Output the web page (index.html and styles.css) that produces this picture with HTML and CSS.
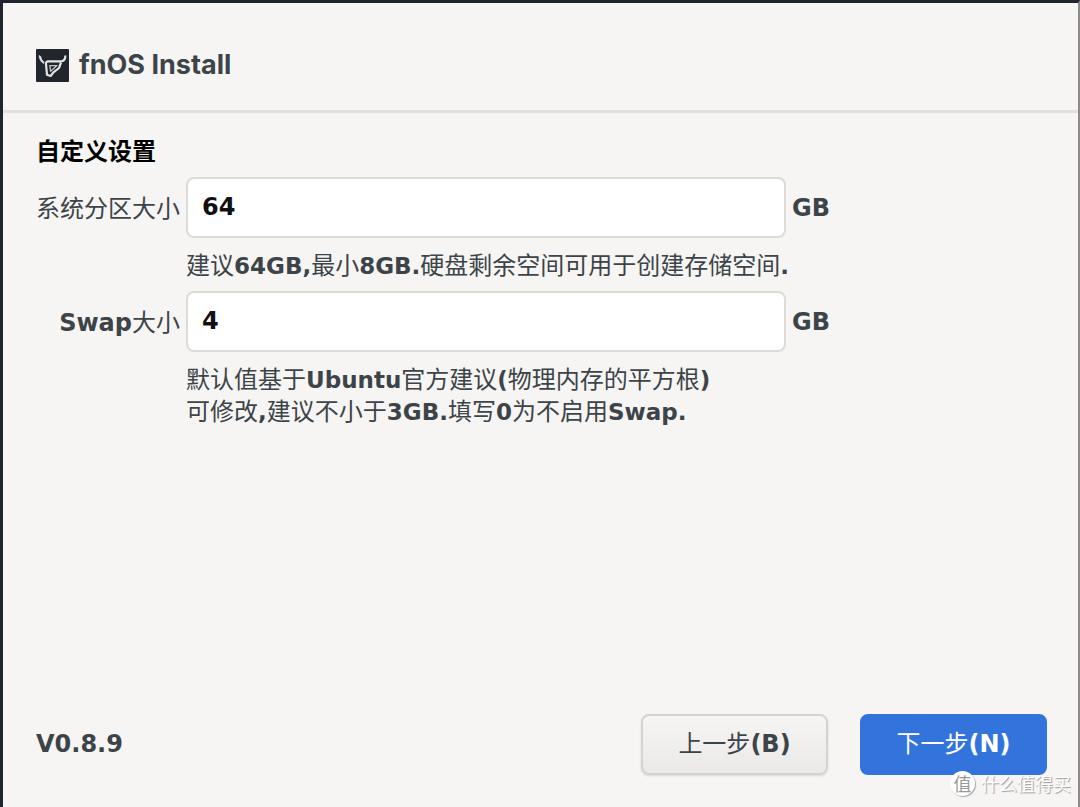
FILE: index.html
```html
<!DOCTYPE html>
<html lang="zh-CN">
<head>
<meta charset="utf-8">
<meta name="viewport" content="width=device-width, initial-scale=1">
<title>fnOS Install</title>
<link rel="stylesheet" href="styles.css">
</head>
<body>
<div class="window">
  <header class="header">
    <svg class="logo" viewBox="0 0 33 33" aria-hidden="true">
      <rect width="33" height="33" rx="1" fill="#20262c"/>
      <path d="M3 6.5C3.2 9.8 4.6 12.6 7.6 14.6L8.2 13.2C6 11.6 5.2 9.8 4.9 7.6Z" fill="#e4e5e5" stroke="#e4e5e5" stroke-width=".6"/>
      <path d="M29.4 6.5C29.3 10.4 27.8 12.4 24.6 12.4H12.4C10.4 12.4 9.8 13.4 10 15.2L11 25.8L14.6 27L17.4 23.4L23 19L25 13.6" fill="none" stroke="#e4e5e5" stroke-width="2.2" stroke-linejoin="round"/>
      <path d="M13.8 16.6H21L14.6 22.2Z" fill="none" stroke="#c4c7c8" stroke-width="1.3" stroke-linejoin="round"/>
    </svg>
    <h1 class="brand">fnOS Install</h1>
  </header>
  <main class="content">
    <h2 class="title">自定义设置</h2>
    <form class="form" id="settings">
      <label class="label" for="system-size">系统分区大小</label>
      <input class="field" id="system-size" type="text" inputmode="numeric" value="64">
      <span class="unit">GB</span>
      <p class="hint">建议<b>64GB,</b>最小<b>8GB.</b>硬盘剩余空间可用于创建存储空间<b>.</b></p>
      <label class="label" for="swap-size"><b>Swap</b>大小</label>
      <input class="field" id="swap-size" type="text" inputmode="numeric" value="4">
      <span class="unit">GB</span>
      <p class="hint">默认值基于<b>Ubuntu</b>官方建议<b>(</b>物理内存的平方根<b>)</b><br>可修改<b>,</b>建议不小于<b>3GB.</b>填写<b>0</b>为不启用<b>Swap.</b></p>
    </form>
  </main>
  <footer class="footer">
    <span class="version">V0.8.9</span>
    <button class="button" type="button">上一步<b>(B)</b></button>
    <button class="button primary" type="submit" form="settings">下一步<b>(N)</b></button>
  </footer>
  <div class="watermark"><span class="seal">值</span>什么值得买</div>
</div>
</body>
</html>
```
FILE: styles.css
```css
* { box-sizing: border-box; }

body {
  margin: 0;
  background: #f6f5f3;
  color: #3d4449;
  font: 24px/32px "Noto Sans CJK SC", sans-serif;
}

b, .unit, .version, .field {
  font-family: "DejaVu Sans", "Noto Sans CJK SC", sans-serif;
  font-weight: 700;
  line-height: 1;
}

.window {
  position: relative;
  display: flex;
  flex-direction: column;
  min-height: 100vh;
  border: solid #20242c;
  border-width: 3px 2px 0 3px;
  border-right-color: #8a8b8d;
}

.header {
  display: flex;
  align-items: center;
  gap: 10px;
  padding: 42px 33px 25px;
  border-bottom: 3px solid #e1e0de;
}

.logo { width: 33px; height: 33px; }

.brand {
  margin: 0;
  font: 700 27px/40px Inter, sans-serif;
}

.content {
  flex: 1;
  padding: 21px 33px;
}

.title {
  margin: 0 0 11px;
  color: #000;
  font-size: 24px;
  font-weight: 700;
  line-height: 32px;
}

.form {
  display: grid;
  grid-template-columns: auto minmax(0, 600px) auto;
  justify-content: start;
  align-items: center;
  column-gap: 6px;
}

.label {
  padding-bottom: 2px;
  text-align: right;
  white-space: nowrap;
}

.hint b { font-size: 23px; }

.field {
  width: 100%;
  height: 61px;
  padding: 0 14px 2px;
  border: 2px solid #dedbd7;
  border-radius: 8px;
  background: #fff;
  color: #111;
  font-size: 24px;
}

.hint {
  grid-column: 2 / -1;
  margin: 10px 0 11px;
}

.footer {
  display: flex;
  align-items: center;
  gap: 32px;
  padding: 0 31px 32px 33px;
}

.version { margin-right: auto; padding-bottom: 1px; }

.button {
  min-width: 187px;
  height: 61px;
  padding: 0 24px 5px;
  border: 2px solid #d6d3cf;
  border-radius: 8px;
  background: linear-gradient(#f6f5f3, #eae9e8);
  box-shadow: 0 1px 2px #d9d7d4;
  color: inherit;
  font: inherit;
}

.primary {
  border-color: #3273dc;
  background: #3273dc;
  box-shadow: none;
  color: #fff;
}

.watermark {
  position: absolute;
  right: 7px;
  bottom: 10px;
  display: flex;
  align-items: center;
  gap: 6px;
  color: #fff;
  font-size: 18px;
  line-height: 28px;
  text-shadow: 1px 1px 1px #999;
}

.seal {
  width: 25px;
  height: 25px;
  border-radius: 50%;
  background: #fff;
  box-shadow: 1px 1px 1px #aaa;
  color: #999;
  line-height: 24px;
  text-align: center;
  text-shadow: none;
}
```
